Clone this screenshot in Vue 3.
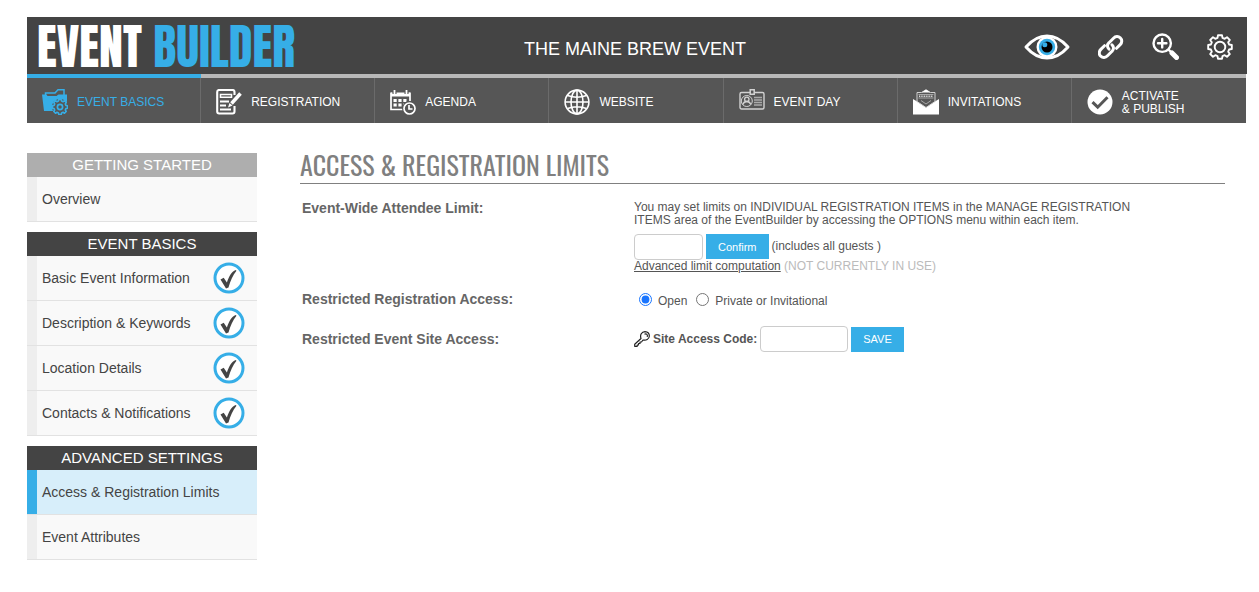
<script setup>
import { ref } from 'vue'

const tabs = [
  { id: 'basics', label: 'EVENT BASICS' },
  { id: 'registration', label: 'REGISTRATION' },
  { id: 'agenda', label: 'AGENDA' },
  { id: 'website', label: 'WEBSITE' },
  { id: 'day', label: 'EVENT DAY' },
  { id: 'invitations', label: 'INVITATIONS' },
  { id: 'publish', label: 'ACTIVATE\n& PUBLISH' },
]

const groups = [
  { title: 'GETTING STARTED', light: true, items: [{ label: 'Overview' }] },
  {
    title: 'EVENT BASICS',
    items: [
      { label: 'Basic Event Information', done: true },
      { label: 'Description & Keywords', done: true },
      { label: 'Location Details', done: true },
      { label: 'Contacts & Notifications', done: true },
    ],
  },
  {
    title: 'ADVANCED SETTINGS',
    items: [{ label: 'Access & Registration Limits', active: true }, { label: 'Event Attributes' }],
  },
]

const limit = ref('')
const access = ref('open')
const code = ref('')
</script>

<template>
  <div class="page">
    <header class="top">
      <a class="logo" href="#">EVENT <span>BUILDER</span></a>
      <div class="event-name">THE MAINE BREW EVENT</div>
      <div class="tools">
        <a href="#" aria-label="Preview">
          <svg width="46" height="26" viewBox="0 0 46 26">
            <path d="M2 13C9 5 15 2 23 2s14 3 21 11c-7 8-13 11-21 11S9 21 2 13z" fill="#444" stroke="#fff" stroke-width="3" stroke-linejoin="round" />
            <circle cx="23" cy="13" r="10.5" fill="#fff" />
            <circle cx="23" cy="13" r="8.2" fill="#36aee7" />
            <circle cx="23" cy="13" r="5.500" fill="#000" />
            <circle cx="20.8" cy="10.8" r="2.500" fill="#36aee7" />
          </svg>
        </a>
        <a href="#" aria-label="Link">
          <svg width="26" height="26" viewBox="0 0 26 26" fill="none" stroke="#fff" stroke-width="3" stroke-linecap="round">
            <path d="M11 15.200c-2-1.800-2-4.600 0-6.500l4.500-4.500c2-2 4.800-2.200 6.800-.4s1.900 4.800-.1 6.800L18.500 14.300" />
            <path d="M14 10.800c2 1.800 2 4.600 0 6.500l-4.500 4.500c-2 2-4.800 2.200-6.800.4s-1.900-4.800.1-6.800L6.500 11.700" />
          </svg>
        </a>
        <a href="#" aria-label="Zoom in">
          <svg width="27" height="27" viewBox="0 0 27 27" fill="none" stroke="#fff" stroke-linecap="round">
            <circle cx="10.200" cy="10.200" r="8.700" stroke-width="2.400" />
            <path d="M10.200 6v8.400M6 10.200h8.400" stroke-width="2.400" />
            <path d="M16.800 16.800l2.200 2.200" stroke-width="2.400" />
            <path d="M20 20l4.500 4.500" stroke-width="5" />
          </svg>
        </a>
        <a href="#" aria-label="Settings">
          <svg width="26" height="26" viewBox="0 0 26 26" fill="none" stroke="#fff" stroke-width="1.900" stroke-linejoin="round">
            <path d="M10.500 3.900L11 1.200h4l.5 2.700 2.200.9L20 3.200 22.800 6l-1.600 2.300.9 2.200 2.700.5v4l-2.700.5-.9 2.200 1.600 2.300-2.800 2.800-2.300-1.600-2.200.9-.5 2.700h-4l-.5-2.700-2.200-.9L6 22.800 3.200 20l1.600-2.300-.9-2.200-2.700-.5v-4l2.700-.5.9-2.200L3.200 6 6 3.200l2.300 1.600z" />
            <circle cx="13" cy="13" r="5.300" />
          </svg>
        </a>
      </div>
    </header>

    <nav class="tabs">
      <a v-for="(tab, i) in tabs" :key="tab.id" href="#" class="tab" :class="{ current: i === 0 }">
        <svg v-if="tab.id === 'basics'" width="26" height="26" viewBox="0 0 26 26">
          <path d="M3.500 6.500V4h9.500L16 .800h6v6" fill="none" stroke="currentColor" stroke-width="1.500" />
          <path d="M0 5.500h4.500l1 1.500h9L16.500 5.500H25V16l-9-2-4 8H2z" fill="currentColor" />
          <circle cx="18" cy="18" r="8" fill="#565656" />
          <path d="M16.400 12.100l.4-1.600h2.400l.4 1.600 1.400.6 1.500-.9 1.700 1.700-.9 1.500.6 1.400 1.600.4v2.400l-1.600.4-.6 1.400.9 1.500-1.700 1.700-1.500-.9-1.400.6-.4 1.600h-2.400l-.4-1.600-1.400-.6-1.500.9-1.700-1.700.9-1.500-.6-1.400-1.600-.4v-2.400l1.600-.4.6-1.400-.9-1.500 1.700-1.700 1.500.9z" fill="none" stroke="currentColor" stroke-width="1.600" stroke-linejoin="round" />
          <circle cx="18" cy="18" r="2.600" fill="none" stroke="currentColor" stroke-width="1.700" />
        </svg>
        <svg v-else-if="tab.id === 'registration'" width="26" height="26" viewBox="0 0 26 26" fill="none" stroke="currentColor">
          <path d="M18.500 6V3q0-2-2-2H3Q1.200 1 1.200 3v19.500q0 2 2 2H16.500q2 0 2-2V17" stroke-width="2.100" />
          <path d="M4.500 5.500h11v2.700h-11z" stroke-width="1.500" />
          <path d="M4 12.500h9M4 16.500h6M4 20.500h11" stroke-width="1.800" />
          <path d="M24.500 4.500L15.500 14.500" stroke-width="3.500" />
          <path d="M13.500 14l3 2.500-4.500 2z" fill="currentColor" stroke="none" />
        </svg>
        <svg v-else-if="tab.id === 'agenda'" width="26" height="26" viewBox="0 0 26 26" fill="none" stroke="currentColor">
          <path d="M1 3.500v17h13M20 12V3.500" stroke-width="1.700" />
          <path d="M1 5.500h19" stroke-width="4" />
          <path d="M4.500 0v5M16.500 0v5" stroke="#565656" stroke-width="4" />
          <path d="M4.500 1v6M16.500 1v6" stroke-width="1.800" />
          <path d="M3.500 11.500h14M3.500 16h11" stroke-width="3.200" stroke-dasharray="3.200 1.700" />
          <circle cx="19.500" cy="19.500" r="7.500" fill="#565656" stroke="none" />
          <circle cx="19.500" cy="19.500" r="5.500" stroke-width="1.700" />
          <path d="M19 16v4h3.500" stroke-width="1.700" />
        </svg>
        <svg v-else-if="tab.id === 'website'" width="26" height="26" viewBox="0 0 26 26" fill="none" stroke="currentColor" stroke-width="1.600">
          <circle cx="13" cy="13" r="11.900" />
          <ellipse cx="13" cy="13" rx="6" ry="11.900" />
          <path d="M13 1v24M1 13h24M3.500 6.500q9.500 3.500 19 0M3.500 19.500q9.500-3.500 19 0" />
        </svg>
        <svg v-else-if="tab.id === 'day'" width="26" height="26" viewBox="0 0 26 26" fill="none" stroke="#d2d2d2">
          <rect x="1" y="3.500" width="24" height="16.500" rx="1.500" stroke-width="1.400" />
          <path d="M11.200.800h4v4.400h-4z" fill="#565656" stroke-width="1.500" />
          <circle cx="7.800" cy="12" r="5.500" />
          <circle cx="7.800" cy="10.300" r="2.200" stroke-width="1.300" />
          <path d="M3.800 15.500q1-3 4-3t4 3" stroke-width="1.300" />
          <path d="M15 8.500h8M15 11h8M15 13.500h8M15 16h8" stroke="#aaa" stroke-width="1.300" />
        </svg>
        <svg v-else-if="tab.id === 'invitations'" width="26" height="26" viewBox="0 0 26 26">
          <path d="M0 10l13 8 13-8v15.500H0z" fill="currentColor" />
          <path d="M4 3.500h4.500L13 .800l4.500 2.700H22v9L13 18.500 4 12.500z" fill="#565656" stroke="#d2d2d2" />
          <path d="M8.500 3.500L13 .500l4.500 3z" fill="currentColor" />
          <path d="M5.500 5.500h15M5.500 9h15M8 11.500l5 3.500 5-3.500" fill="none" stroke="#bbb" stroke-width=".8" />
          <path d="M6 7.200h14" stroke="#ddd" stroke-width="1.500" stroke-dasharray="1 .7" />
        </svg>
        <svg v-else width="26" height="26" viewBox="0 0 26 26">
          <circle cx="13" cy="13" r="12.500" fill="currentColor" />
          <path d="M5.500 13.200l5.200 5L20.500 8.300" fill="none" stroke="#565656" stroke-width="3" />
        </svg>
        <span>{{ tab.label }}</span>
      </a>
    </nav>

    <div class="body">
      <aside class="side">
        <section v-for="group in groups" :key="group.title">
          <h2 :class="{ light: group.light }">{{ group.title }}</h2>
          <a v-for="item in group.items" :key="item.label" href="#" class="item" :class="{ active: item.active }">
            <span>{{ item.label }}</span>
            <svg v-if="item.done" width="32" height="32" viewBox="0 0 32 32">
              <circle cx="16" cy="16" r="14" fill="#fff" stroke="#36aee7" stroke-width="3" />
              <path d="M7.500 17.500l3.200-1.800 3.200 4.800C16 14.500 18.500 9.500 22.700 8l.8.700C19.800 13 17.500 18.500 15.500 25.500l-2.500 1z" fill="#444" />
            </svg>
          </a>
        </section>
      </aside>

      <main class="main">
        <h1>ACCESS &amp; REGISTRATION LIMITS</h1>

        <div class="row">
          <label class="name" for="limit">Event-Wide Attendee Limit:</label>
          <div>
            <p>You may set limits on INDIVIDUAL REGISTRATION ITEMS in the MANAGE REGISTRATION ITEMS area of the EventBuilder by accessing the OPTIONS menu within each item.</p>
            <div class="line">
              <input id="limit" v-model="limit" class="box small" type="text" />
              <button class="btn" type="button">Confirm</button>
              <span class="note">(includes all guests )</span>
            </div>
            <div class="muted"><a href="#">Advanced limit computation</a> (NOT CURRENTLY IN USE)</div>
          </div>
        </div>

        <div class="row">
          <div id="access-name" class="name">Restricted Registration Access:</div>
          <div class="radios" role="radiogroup" aria-labelledby="access-name">
            <label><input v-model="access" type="radio" name="access" value="open" /><span>Open</span></label>
            <label><input v-model="access" type="radio" name="access" value="private" /><span>Private or Invitational</span></label>
          </div>
        </div>

        <div class="row site">
          <div class="name">Restricted Event Site Access:</div>
          <div class="line">
            <label for="code">
              <svg width="16" height="16" viewBox="0 0 16 16" fill="#fff" stroke="#222" stroke-width="1.200" stroke-linejoin="round">
                <path d="M7 7.500C5.800 4 7.500.800 11 .700c3 0 4.500 2 4.300 4.500-.3 3-3.200 4.600-6.300 3.800L7.500 11H6v1.500H4.500V14H3.200v1.300H.700V13.200z" />
                <path d="M10.500 3.200q1.500-1 2.500.3t0 2.300" fill="none" />
              </svg>
              <span>Site Access Code:</span>
            </label>
            <input id="code" v-model="code" class="box" type="text" />
            <button class="btn" type="button">SAVE</button>
          </div>
        </div>
      </main>
    </div>
  </div>
</template>

<style>
body {
  background: #fff;
}
</style>

<style scoped>
* {
  box-sizing: border-box;
}
.page {
  padding: 17px 12px 32px 27px;
  font-family: "Liberation Sans", Arial, sans-serif;
  font-size: 12px;
  line-height: 13px;
  color: #555;
}
a {
  color: inherit;
  text-decoration: none;
}
svg {
  display: block;
  flex: none;
}
.top {
  display: grid;
  grid-template-columns: 1fr auto 1fr;
  align-items: center;
  height: 57px;
  padding: 0 14px 0 10px;
  background: #444;
  color: #fff;
}
.logo {
  padding-top: 4px;
  font-family: Anton, Oswald, "Roboto Condensed", Roboto, sans-serif;
  font-size: 48px;
  line-height: 53px;
  font-weight: normal;
  white-space: nowrap;
}
.logo span {
  color: #36aee7;
}
.event-name {
  padding-top: 6px;
  font-size: 18px;
  line-height: 22px;
}
.tools {
  display: flex;
  align-items: center;
  justify-content: flex-end;
  gap: 28px;
  padding-top: 2px;
}
.tabs {
  display: flex;
  margin-right: 1px;
  background: #565656;
  color: #fff;
}
.tab {
  display: flex;
  flex: 1 1 0;
  align-items: center;
  gap: 9px;
  height: 49px;
  padding: 2px 0 0 15px;
  border-top: 4px solid #b8b8b8;
  box-shadow: inset -1px 0 #6b6b6b;
  white-space: pre-line;
}
.tab:last-child {
  box-shadow: none;
}
.tab span {
  padding-top: 2px;
}
.tab.current {
  border-top-color: #36aee7;
  color: #36aee7;
}
.body {
  display: flex;
  gap: 43px;
  margin-top: 30px;
}
.side {
  display: flex;
  flex: 0 0 230px;
  flex-direction: column;
  gap: 10px;
}
h2 {
  margin: 0;
  background: #444;
  color: #fff;
  font-size: 15px;
  font-weight: normal;
  line-height: 24px;
  text-align: center;
}
h2.light {
  background: #aeaeae;
}
.item {
  display: flex;
  align-items: center;
  justify-content: space-between;
  height: 45px;
  padding: 0 12px 0 15px;
  border-bottom: 1px solid #e2e2e2;
  box-shadow: inset 10px 0 #eee;
  background: #f9f9f9;
  color: #444;
  font-size: 14px;
  line-height: 16px;
}
.item.active {
  box-shadow: inset 10px 0 #36aee7;
  background: #d7eefa;
}
.main {
  flex: 1;
  margin-right: 22px;
}
h1 {
  margin: 0 0 16px;
  padding-bottom: 6px;
  border-bottom: 1px solid #808080;
  color: #808080;
  font-family: Oswald, "Roboto Condensed", Roboto, sans-serif;
  font-size: 26px;
  font-weight: 400;
  line-height: 24px;
}
.row {
  display: grid;
  grid-template-columns: 332px minmax(0, 502px);
  padding-left: 2px;
}
.row + .row {
  margin-top: 18px;
}
.name {
  color: #666;
  font-size: 14px;
  font-weight: bold;
  line-height: 16px;
}
p {
  margin: 1px 0 7px;
}
.line {
  display: flex;
  align-items: flex-start;
  gap: 3px;
}
.note {
  line-height: 25px;
}
.box {
  width: 88px;
  height: 26px;
  padding: 0 6px;
  border: 1px solid #ccc;
  border-radius: 4px;
  background: #fff;
  color: #555;
  font: inherit;
}
.box.small {
  width: 69px;
}
.btn {
  height: 25px;
  padding: 0 12px;
  border: 0;
  background: #36aee7;
  color: #fff;
  font: 11px "Liberation Sans", Arial, sans-serif;
}
.muted {
  color: #bbb;
}
.muted a {
  color: #555;
  text-decoration: underline;
}
.radios {
  display: flex;
  gap: 9px;
  padding: 1px 0 0 5px;
}
.radios label {
  display: flex;
  gap: 6px;
}
.radios input {
  width: 13px;
  height: 13px;
  margin: 1px 0 0;
  accent-color: #1975ff;
}
.radios span {
  padding-top: 3px;
}
.row.site,
.site .line {
  align-items: center;
}
.site label {
  display: flex;
  align-items: center;
  gap: 3px;
  font-weight: bold;
}
</style>
